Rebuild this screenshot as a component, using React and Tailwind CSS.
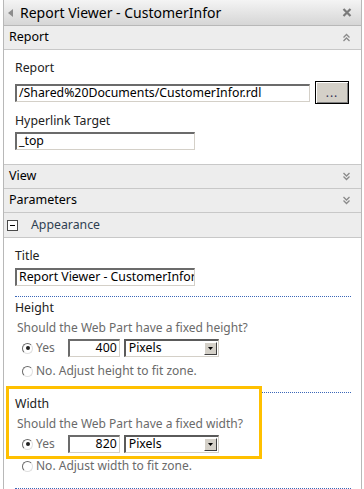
import React from 'react';

const FONT = "font-['Noto_Sans','DejaVu_Sans',sans-serif]";

function DoubleChevron({ up }) {
  return (
    <svg width="9" height="9" viewBox="0 0 9 9" className={up ? '' : 'rotate-180'}>
      <path d="M1.5 4.5 L4.5 1.5 L7.5 4.5" fill="none" stroke="#8a8a8a" strokeWidth="1.3" />
      <path d="M1.5 8 L4.5 5 L7.5 8" fill="none" stroke="#8a8a8a" strokeWidth="1.3" />
    </svg>
  );
}

function SectionHeader({ title, up }) {
  return (
    <div className="flex h-[24px] shrink-0 items-center justify-between border-b border-[#c8c8c8] bg-[#ededed] pl-[5px] pr-[10px] text-[12.5px] text-black">
      <span>{title}</span>
      <DoubleChevron up={up} />
    </div>
  );
}

function TextBox({ value, className = '', right }) {
  return (
    <div
      className={`flex h-[18px] items-center overflow-hidden whitespace-nowrap border-l-2 border-t-2 border-b border-r border-l-[#6b6b6b] border-t-[#6b6b6b] border-b-[#d4d0c8] border-r-[#d4d0c8] bg-white px-[2px] text-[12.3px] leading-none text-black ${right ? 'justify-end' : ''} ${className}`}
    >
      {value}
    </div>
  );
}

function PixelSelect() {
  return (
    <div className="flex h-[18px] w-[95px] items-center justify-between border-l-2 border-t-2 border-b border-r border-l-[#5a5a5a] border-t-[#5a5a5a] border-b-[#d4d0c8] border-r-[#d4d0c8] bg-white pl-[3px] pr-[1px] text-[12.3px] leading-none text-black">
      <span>Pixels</span>
      <div className="flex h-[13px] w-[13px] items-center justify-center border border-b-[#404040] border-r-[#404040] border-t-white border-l-white bg-[#d4d0c8]">
        <svg width="5" height="3" viewBox="0 0 5 3">
          <path d="M0 0 H5 L2.5 3 Z" fill="#000" />
        </svg>
      </div>
    </div>
  );
}

function Radio({ checked }) {
  return (
    <div className="flex h-[11px] w-[11px] items-center justify-center rounded-full border border-t-[#6a6a6a] border-l-[#6a6a6a] border-b-[#e0e0e0] border-r-[#e0e0e0] bg-white">
      {checked ? <div className="h-[4px] w-[4px] rounded-full bg-[#222]" /> : null}
    </div>
  );
}

function Label({ children, className = '' }) {
  return <div className={`text-[12.3px] leading-[16px] text-[#222] ${className}`}>{children}</div>;
}

function SizeBlock({ label, question, value }) {
  return (
    <div className="flex flex-col">
      <Label>{label}</Label>
      <div className="mt-[4px] pl-[2px] text-[12px] leading-[16px] text-[#6a6a6a]">{question}</div>
      <div className="mt-[3px] flex items-center pl-[7px]">
        <Radio checked />
        <span className="ml-[3px] text-[12px] leading-none text-[#6a6a6a]">Yes</span>
        <TextBox value={value} right className="ml-[13px] w-[52px]" />
        <div className="ml-[4px]"><PixelSelect /></div>
      </div>
    </div>
  );
}

function NoRow({ text, className = '' }) {
  return (
    <div className={`flex h-[14px] items-center pl-[7px] ${className}`}>
      <Radio />
      <span className="ml-[3px] text-[12px] leading-none text-[#6a6a6a]">{text}</span>
    </div>
  );
}

export default function App() {
  return (
    <div className={`h-[489px] w-[364px] overflow-hidden bg-white ${FONT}`}>
      <div className="ml-[3px] flex h-full w-[359px] flex-col border-x border-[#b8b8b8]">
        <div className="flex h-[26px] shrink-0 items-center justify-between border-b border-[#b8b8b8] bg-gradient-to-b from-[#f4f4f4] to-[#d6d6d6] pl-[4px] pr-[9px]">
          <div className="flex items-center">
            <svg width="5" height="8" viewBox="0 0 5 8">
              <path d="M5 0 V8 L0 4 Z" fill="#8c8c8c" />
            </svg>
            <span className="ml-[7px] text-[14px] leading-none text-black">Report Viewer - CustomerInfor</span>
          </div>
          <svg width="10" height="9" viewBox="0 0 10 9">
            <path d="M1.5 1 L8.5 8 M8.5 1 L1.5 8" stroke="#7a7a7a" strokeWidth="2.2" />
          </svg>
        </div>

        <SectionHeader title="Report" up />

        <div className="flex flex-col border-b border-[#c8c8c8] px-[11px] pb-[14px] pt-[10px]">
          <Label>Report</Label>
          <div className="mt-[5px] flex items-center">
            <TextBox value="/Shared%20Documents/CustomerInfor.rdl" className="w-[295px]" />
            <div className="ml-[5px] flex h-[23px] w-[34px] items-center justify-center border border-black bg-[#d4d0c8] shadow-[inset_1px_1px_0_#fff,inset_-1px_-1px_0_#808080]">
              <span className="text-[12px] leading-none tracking-[1px] text-[#335]">...</span>
            </div>
          </div>
          <Label className="mt-[9px]">Hyperlink Target</Label>
          <TextBox value="_top" className="mt-[3px] w-[180px]" />
        </div>

        <SectionHeader title="View" />
        <SectionHeader title="Parameters" />

        <div className="flex h-[25px] shrink-0 items-center border-b border-[#c8c8c8] bg-[#ededed] pl-[3px] text-[12.3px]">
          <div className="flex h-[11px] w-[11px] items-center justify-center border border-[#4a4a4a] bg-white">
            <div className="h-[1px] w-[5px] bg-black" />
          </div>
          <span className="ml-[13px] text-[#2f3f52]">Appearance</span>
        </div>

        <div className="flex flex-col pl-[11px] pr-[10px] pt-[10px]">
          <Label>Title</Label>
          <TextBox value="Report Viewer - CustomerInfor" className="mt-[4px] w-[180px]" />
          <div className="mt-[10px] border-t border-dotted border-[#3b67b8]" />
          <div className="mt-[3px]">
            <SizeBlock label="Height" question="Should the Web Part have a fixed height?" value="400" />
          </div>
          <NoRow text="No. Adjust height to fit zone." className="mt-[7px]" />
          <div className="mt-[14px] border-t border-dotted border-[#3b67b8]" />
          <div className="relative -ml-[9px] -mt-[7px] w-[256px] border-[3px] border-[#ffc000] bg-white pb-[3px] pl-[6px] pt-[7px]">
            <SizeBlock label="Width" question="Should the Web Part have a fixed width?" value="820" />
          </div>
          <NoRow text="No. Adjust width to fit zone." className="mt-[0px]" />
          <div className="mt-[15px] border-t border-dotted border-[#3b67b8]" />
        </div>
      </div>
    </div>
  );
}
